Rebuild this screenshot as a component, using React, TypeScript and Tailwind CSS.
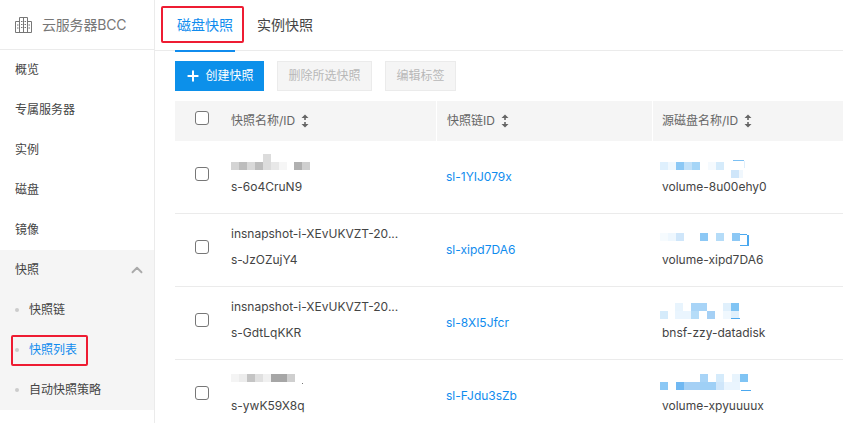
import { Plus, ChevronUp } from "lucide-react";

type Cell = [number, number, number, number, string];

interface Row {
  name?: string;
  id: string;
  chain: string;
  disk: string;
  nameMosaic?: Cell[];
  diskMosaic: Cell[];
}

// 打码区域: x, y, w, h, 颜色
const rows: Row[] = [
  {
    id: "s-6o4CruN9",
    chain: "sl-1YIJ079x",
    disk: "volume-8u00ehy0",
    nameMosaic: [
      [0, 10, 8, 8, "#d4d4d4"],
      [8, 10, 8, 8, "#bdbdbd"],
      [16, 10, 8, 8, "#d9d9d9"],
      [24, 10, 8, 8, "#bdbdbd"],
      [32, 2, 8, 16, "#dcdcdc"],
      [40, 10, 8, 8, "#e8e8e8"],
      [48, 10, 8, 8, "#f6f6f6"],
      [63, 10, 8, 8, "#b0b0b0"],
      [71, 10, 8, 8, "#cfcfcf"],
    ],
    diskMosaic: [
      [0, 7, 8, 8, "#dff0fd"],
      [8, 7, 8, 8, "#f0f8fe"],
      [16, 7, 8, 8, "#8cc8f5"],
      [24, 7, 8, 8, "#c2e1f9"],
      [32, 7, 8, 8, "#a5d5f7"],
      [48, 7, 8, 8, "#f5fafe"],
      [56, 7, 8, 8, "#d5ebfb"],
      [71, 15, 8, 8, "#cfe6fa"],
      [79, 15, 4, 8, "#f0f7fd"],
      [73, 5, 11, 1, "#7cc0f3"],
      [84, 6, 1, 7, "#e0effb"],
    ],
  },
  {
    name: "insnapshot-i-XEvUKVZT-20...",
    id: "s-JzOZujY4",
    chain: "sl-xipd7DA6",
    disk: "volume-xipd7DA6",
    diskMosaic: [
      [0, 5, 8, 8, "#f6fbfe"],
      [8, 5, 8, 8, "#eef7fe"],
      [16, 5, 8, 8, "#cfe6fa"],
      [40, 5, 8, 8, "#8cc8f5"],
      [56, 5, 8, 8, "#b5dcf8"],
      [72, 5, 8, 8, "#8cc8f5"],
      [80, 6, 7, 1, "#4aa8ef"],
      [87, 7, 2, 11, "#4aa8ef"],
      [80, 17, 8, 1, "#4aa8ef"],
    ],
  },
  {
    name: "insnapshot-i-XEvUKVZT-20...",
    id: "s-GdtLqKKR",
    chain: "sl-8XI5Jfcr",
    disk: "bnsf-zzy-datadisk",
    diskMosaic: [
      [15, 2, 8, 8, "#e8f4fd"],
      [31, 2, 16, 8, "#a8d4f7"],
      [63, 2, 8, 8, "#e0f0fc"],
      [71, 2, 8, 8, "#80c4f4"],
      [0, 10, 8, 8, "#d5ebfb"],
      [15, 10, 16, 8, "#eaf5fe"],
      [31, 10, 8, 8, "#b5dcf8"],
      [47, 10, 8, 8, "#a5d0f5"],
      [63, 10, 8, 8, "#f0f8fe"],
      [71, 10, 8, 8, "#e0f0fc"],
      [71, 17, 9, 1, "#4aa8ef"],
    ],
  },
  {
    id: "s-ywK59X8q",
    chain: "sl-FJdu3sZb",
    disk: "volume-xpyuuuux",
    nameMosaic: [
      [0, 3, 8, 8, "#f4f4f4"],
      [8, 3, 8, 8, "#ececec"],
      [16, 3, 8, 8, "#c4c4c4"],
      [24, 3, 8, 8, "#e0e0e0"],
      [32, 3, 8, 8, "#f0f0f0"],
      [40, 3, 16, 8, "#a6a6a6"],
      [56, 3, 8, 8, "#cfcfcf"],
      [71, 12, 1, 1, "#777777"],
    ],
    diskMosaic: [
      [40, 0, 8, 8, "#a8d4f7"],
      [56, 0, 8, 8, "#d5ebfb"],
      [72, 0, 8, 8, "#e8f4fd"],
      [80, 0, 8, 8, "#80c4f4"],
      [0, 8, 8, 8, "#8cc8f5"],
      [16, 8, 8, 8, "#70b8f2"],
      [24, 8, 16, 8, "#a5d0f5"],
      [40, 8, 16, 8, "#9fd0f6"],
      [56, 8, 8, 8, "#cfe6fa"],
      [64, 8, 16, 8, "#eaf5fe"],
      [81, 16, 10, 1, "#4aa8ef"],
    ],
  },
];

const menu = ["概览", "专属服务器", "实例", "磁盘", "镜像"];
const subMenu = ["快照链", "快照列表", "自动快照策略"];

function Mosaic({ cells, width = 92 }: { cells: Cell[]; width?: number }) {
  return (
    <svg width={width} height={18} className="block overflow-visible">
      {cells.map(([x, y, w, h, fill], i) => (
        <rect key={i} x={x} y={y} width={w} height={h} fill={fill} />
      ))}
    </svg>
  );
}

function SortIcon() {
  return (
    <svg width="8" height="14" viewBox="0 0 8 14" fill="none" className="ml-[6px] shrink-0">
      <path d="M4 0.5 L7.5 4 H4.8 V6 H3.2 V4 H0.5 Z" fill="#666" />
      <path d="M3.2 8 H4.8 V10 H7.5 L4 13.5 L0.5 10 H3.2 Z" fill="#666" />
    </svg>
  );
}

function Check({ className = "" }: { className?: string }) {
  return <span className={`block size-[14px] shrink-0 rounded-[3px] border border-[#777] bg-white ${className}`} />;
}

function BuildingIcon() {
  return (
    <svg width="17" height="17" viewBox="0 0 17 17" fill="none" stroke="#777" strokeWidth="1">
      <path d="M0.5 16.5 H16.5" />
      <path d="M0.5 16.5 V5.5 H4.5" />
      <path d="M16.5 16.5 V5.5 H12.5" />
      <path d="M4.5 16.5 V1.5 H12.5 V16.5" />
      <path d="M8.5 1.5 V16.5" />
      <path d="M6 5.5 H7.5 M9.5 5.5 H11 M6 8.5 H7.5 M9.5 8.5 H11 M6 11.5 H7.5 M9.5 11.5 H11" />
      <path d="M2 9 H3.5 M2 12 H3.5 M13.5 9 H15 M13.5 12 H15" />
    </svg>
  );
}

export default function App() {
  return (
    <div className="flex h-[423px] w-[843px] overflow-hidden bg-white font-['Inter','Noto_Sans_CJK_SC',sans-serif] text-xs text-[#444]">
      {/* 左侧菜单 */}
      <aside className="w-[155px] shrink-0 border-r border-[#ebebeb]">
        <div className="flex h-[50px] items-center gap-[10px] border-b border-[#ebebeb] pl-[15px] text-sm tracking-[-0.2px] text-[#777]">
          <BuildingIcon />
          <span>云服务器BCC</span>
        </div>
        {menu.map((m) => (
          <div key={m} className="flex h-10 items-center pl-[15px]">
            {m}
          </div>
        ))}
        <div className="bg-[#f5f5f5]">
          <div className="flex h-10 items-center justify-between pl-[15px] pr-[8px]">
            <span>快照</span>
            <ChevronUp size={18} strokeWidth={2.5} className="text-[#aaa]" />
          </div>
          {subMenu.map((s) => (
            <div key={s} className="relative flex h-10 items-center pl-[15px]">
              <span className="mr-[10px] size-1 rounded-full bg-[#cccccc]" />
              <span className={s === "快照列表" ? "text-[#108cee]" : ""}>{s}</span>
              {s === "快照列表" && (
                <span className="absolute left-[11px] top-[5px] h-[31px] w-[77px] rounded-[2px] border-2 border-[#ee1c32]" />
              )}
            </div>
          ))}
        </div>
      </aside>

      {/* 主内容 */}
      <main className="min-w-0 flex-1">
        <div className="relative flex h-[51px] items-center border-b border-[#ebebeb] pl-5 text-sm">
          <div className="relative flex h-[51px] w-[60px] items-center justify-center text-[#108cee]">
            磁盘快照
            <span className="absolute bottom-[-1px] left-0 h-[2px] w-full bg-[#108cee]" />
          </div>
          <div className="ml-[22px]">实例快照</div>
          <span className="absolute left-[6px] top-[6px] h-[37px] w-[83px] rounded-[2px] border-2 border-[#ee1c32]" />
        </div>

        <div className="flex gap-[13px] pl-5 pt-[10px]">
          <button className="flex h-[30px] w-[89px] items-center justify-center gap-[4px] bg-[#0c90ea] text-white">
            <Plus size={16} strokeWidth={3} />
            创建快照
          </button>
          <button className="h-[30px] w-[95px] border border-[#ebebeb] bg-[#f5f5f5] text-[#b8b8b8]">删除所选快照</button>
          <button className="h-[30px] w-[71px] border border-[#ebebeb] bg-[#f5f5f5] text-[#b8b8b8]">编辑标签</button>
        </div>

        <div className="ml-5 mt-[10px]">
          <div className="flex h-10 bg-[#f5f5f5] text-[#666]">
            <div className="flex w-[261px] pl-5">
              <Check className="mt-[10px]" />
              <div className="flex h-10 items-center">
                <span className="ml-[22px]">快照名称/ID</span>
                <SortIcon />
              </div>
            </div>
            <div className="flex w-[216px] items-center border-l border-white pl-[10px]">
              <span>快照链ID</span>
              <SortIcon />
            </div>
            <div className="flex flex-1 items-center border-l border-white pl-[9px]">
              <span>源磁盘名称/ID</span>
              <SortIcon />
            </div>
          </div>

          {rows.map((r) => (
            <div key={r.id} className="flex h-[73px] border-b border-[#ebebeb]">
              <div className="flex w-[261px] pl-5">
                <Check className="mt-[26px]" />
                <div className="ml-[22px] pt-[7px]">
                  <div className="flex h-[26px] items-center">
                    {r.name ? <span>{r.name}</span> : <Mosaic cells={r.nameMosaic ?? []} width={82} />}
                  </div>
                  <div className="leading-[26px]">{r.id}</div>
                </div>
              </div>
              <div className="flex w-[216px] items-center pl-[10px] text-[#108cee]">{r.chain}</div>
              <div className="flex-1 pl-[10px] pt-[14px]">
                <div className="-ml-[2px] h-[19px]">
                  <Mosaic cells={r.diskMosaic} />
                </div>
                <div className="leading-[26px]">{r.disk}</div>
              </div>
            </div>
          ))}
        </div>
      </main>
    </div>
  );
}
